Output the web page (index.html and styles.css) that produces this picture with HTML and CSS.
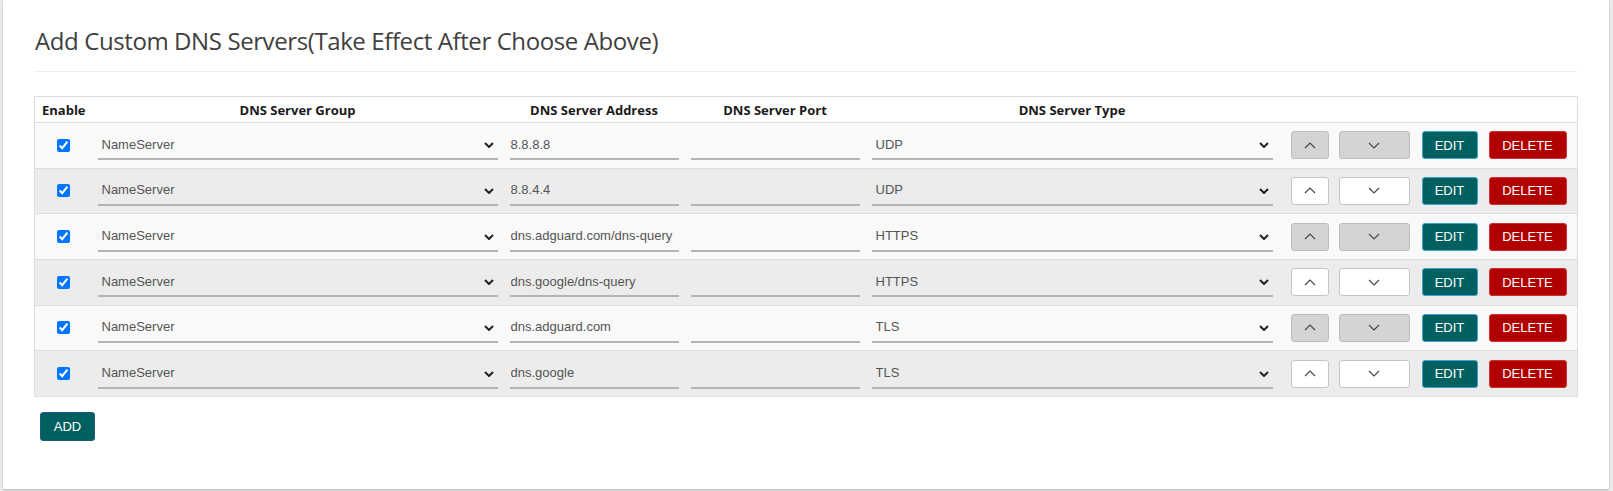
FILE: index.html
```html
<!DOCTYPE html>
<html>
<head>
<meta charset="utf-8">
<title>Custom DNS Servers</title>
<link rel="stylesheet" href="styles.css">
</head>
<body>
<div class="page">
  <div class="card">
    <h3 class="title">Add Custom DNS Servers(Take Effect After Choose Above)</h3>
    <hr class="sep">
    <table class="dns">
      <colgroup>
        <col class="w-enable"><col class="w-group"><col class="w-addr"><col class="w-port"><col class="w-type"><col>
      </colgroup>
      <thead>
        <tr><th class="th-enable">Enable</th><th>DNS Server Group</th><th>DNS Server Address</th><th>DNS Server Port</th><th>DNS Server Type</th><th></th></tr>
      </thead>
      <tbody>
        <tr>
          <td class="c-chk"><input class="chk" type="checkbox" checked></td>
          <td><div class="sel"><select class="field"><option>NameServer</option></select><svg class="caret" viewBox="0 0 10 6"><path d="M1 1L5 5L9 1"/></svg></div></td>
          <td><input class="field inp" type="text" value="8.8.8.8"></td>
          <td><input class="field inp" type="text" value=""></td>
          <td><div class="sel"><select class="field"><option>UDP</option></select><svg class="caret" viewBox="0 0 10 6"><path d="M1 1L5 5L9 1"/></svg></div></td>
          <td class="c-acts"><div class="acts"><button class="mv up off"><svg viewBox="0 0 12 7"><path d="M1 6L6 1L11 6"/></svg></button><button class="mv down off"><svg viewBox="0 0 12 7"><path d="M1 1L6 6L11 1"/></svg></button><button class="btn btn-edit">EDIT</button><button class="btn btn-del">DELETE</button></div></td>
        </tr>
        <tr>
          <td class="c-chk"><input class="chk" type="checkbox" checked></td>
          <td><div class="sel"><select class="field"><option>NameServer</option></select><svg class="caret" viewBox="0 0 10 6"><path d="M1 1L5 5L9 1"/></svg></div></td>
          <td><input class="field inp" type="text" value="8.8.4.4"></td>
          <td><input class="field inp" type="text" value=""></td>
          <td><div class="sel"><select class="field"><option>UDP</option></select><svg class="caret" viewBox="0 0 10 6"><path d="M1 1L5 5L9 1"/></svg></div></td>
          <td class="c-acts"><div class="acts"><button class="mv up"><svg viewBox="0 0 12 7"><path d="M1 6L6 1L11 6"/></svg></button><button class="mv down"><svg viewBox="0 0 12 7"><path d="M1 1L6 6L11 1"/></svg></button><button class="btn btn-edit">EDIT</button><button class="btn btn-del">DELETE</button></div></td>
        </tr>
        <tr>
          <td class="c-chk"><input class="chk" type="checkbox" checked></td>
          <td><div class="sel"><select class="field"><option>NameServer</option></select><svg class="caret" viewBox="0 0 10 6"><path d="M1 1L5 5L9 1"/></svg></div></td>
          <td><input class="field inp" type="text" value="dns.adguard.com/dns-query"></td>
          <td><input class="field inp" type="text" value=""></td>
          <td><div class="sel"><select class="field"><option>HTTPS</option></select><svg class="caret" viewBox="0 0 10 6"><path d="M1 1L5 5L9 1"/></svg></div></td>
          <td class="c-acts"><div class="acts"><button class="mv up off"><svg viewBox="0 0 12 7"><path d="M1 6L6 1L11 6"/></svg></button><button class="mv down off"><svg viewBox="0 0 12 7"><path d="M1 1L6 6L11 1"/></svg></button><button class="btn btn-edit">EDIT</button><button class="btn btn-del">DELETE</button></div></td>
        </tr>
        <tr>
          <td class="c-chk"><input class="chk" type="checkbox" checked></td>
          <td><div class="sel"><select class="field"><option>NameServer</option></select><svg class="caret" viewBox="0 0 10 6"><path d="M1 1L5 5L9 1"/></svg></div></td>
          <td><input class="field inp" type="text" value="dns.google/dns-query"></td>
          <td><input class="field inp" type="text" value=""></td>
          <td><div class="sel"><select class="field"><option>HTTPS</option></select><svg class="caret" viewBox="0 0 10 6"><path d="M1 1L5 5L9 1"/></svg></div></td>
          <td class="c-acts"><div class="acts"><button class="mv up"><svg viewBox="0 0 12 7"><path d="M1 6L6 1L11 6"/></svg></button><button class="mv down"><svg viewBox="0 0 12 7"><path d="M1 1L6 6L11 1"/></svg></button><button class="btn btn-edit">EDIT</button><button class="btn btn-del">DELETE</button></div></td>
        </tr>
        <tr>
          <td class="c-chk"><input class="chk" type="checkbox" checked></td>
          <td><div class="sel"><select class="field"><option>NameServer</option></select><svg class="caret" viewBox="0 0 10 6"><path d="M1 1L5 5L9 1"/></svg></div></td>
          <td><input class="field inp" type="text" value="dns.adguard.com"></td>
          <td><input class="field inp" type="text" value=""></td>
          <td><div class="sel"><select class="field"><option>TLS</option></select><svg class="caret" viewBox="0 0 10 6"><path d="M1 1L5 5L9 1"/></svg></div></td>
          <td class="c-acts"><div class="acts"><button class="mv up off"><svg viewBox="0 0 12 7"><path d="M1 6L6 1L11 6"/></svg></button><button class="mv down off"><svg viewBox="0 0 12 7"><path d="M1 1L6 6L11 1"/></svg></button><button class="btn btn-edit">EDIT</button><button class="btn btn-del">DELETE</button></div></td>
        </tr>
        <tr>
          <td class="c-chk"><input class="chk" type="checkbox" checked></td>
          <td><div class="sel"><select class="field"><option>NameServer</option></select><svg class="caret" viewBox="0 0 10 6"><path d="M1 1L5 5L9 1"/></svg></div></td>
          <td><input class="field inp" type="text" value="dns.google"></td>
          <td><input class="field inp" type="text" value=""></td>
          <td><div class="sel"><select class="field"><option>TLS</option></select><svg class="caret" viewBox="0 0 10 6"><path d="M1 1L5 5L9 1"/></svg></div></td>
          <td class="c-acts"><div class="acts"><button class="mv up"><svg viewBox="0 0 12 7"><path d="M1 6L6 1L11 6"/></svg></button><button class="mv down"><svg viewBox="0 0 12 7"><path d="M1 1L6 6L11 1"/></svg></button><button class="btn btn-edit">EDIT</button><button class="btn btn-del">DELETE</button></div></td>
        </tr>
      </tbody>
    </table>
    <button class="btn btn-add">ADD</button>
  </div>
</div>
</body>
</html>
```

FILE: styles.css
```css
* { box-sizing: border-box; }
html, body { margin: 0; }
body {
  background: #ebebeb;
  font-family: "Open Sans", "Noto Sans", sans-serif;
}
.page { padding: 0 4px 2px 3px; }
.card {
  background: #fff;
  box-shadow: 0 1px 2px rgba(0, 0, 0, 0.25);
  padding: 25px 31px 48px 31px;
}
.title {
  margin: 0;
  padding-left: 1px;
  font-size: 24px;
  line-height: 32px;
  font-weight: 400;
  letter-spacing: -0.4px;
  color: #404040;
}
.sep {
  border: 0;
  border-top: 1px solid #eeeeee;
  margin: 14px 1px 24px 1px;
}
.dns {
  width: 100%;
  border-collapse: collapse;
  table-layout: fixed;
  border: 1px solid #dddddd;
}
.w-enable { width: 57px; }
.w-group { width: 412px; }
.w-addr { width: 181px; }
.w-port { width: 181px; }
.w-type { width: 413px; }
.dns th {
  height: 26px;
  padding: 0;
  font-size: 13px;
  font-weight: 700;
  color: #1a1a1a;
  text-align: center;
  background: #fff;
}
.dns th.th-enable { text-align: left; padding-left: 7px; }
.dns td {
  height: 45.67px;
  padding: 0 6px;
  border-top: 1px solid #dddddd;
  vertical-align: middle;
}
.dns tbody tr:nth-child(odd) { background: #f9f9f9; }
.dns tbody tr:nth-child(even) { background: #ececec; }
.dns td.c-chk { padding: 0; }
.chk {
  display: block;
  width: 13px;
  height: 13px;
  margin: 0 auto;
}
.sel { position: relative; }
.field {
  display: block;
  width: 100%;
  height: 30px;
  border: 0;
  border-bottom: 2px solid #b4b4b4;
  border-radius: 0;
  background: transparent;
  font: 13px "Liberation Sans", Arial, sans-serif;
  color: #555555;
  padding: 0 4px;
  outline: none;
  -webkit-appearance: none;
  appearance: none;
}
.inp { padding: 0 1px; }
.caret {
  position: absolute;
  right: 4px;
  top: 12px;
  width: 10px;
  height: 6px;
  pointer-events: none;
  fill: none;
  stroke: #222;
  stroke-width: 2;
}
.dns td.c-acts { padding-left: 12px; padding-right: 0; }
.acts { display: flex; align-items: center; }
.mv {
  height: 28px;
  border: 1px solid #c4c4c4;
  border-radius: 3px;
  background: #fff;
  display: flex;
  align-items: center;
  justify-content: center;
  padding: 0;
}
.mv svg {
  width: 12px;
  height: 7px;
  fill: none;
  stroke: #444;
  stroke-width: 1.1;
}
.mv.up { width: 38px; }
.mv.down { width: 71px; margin-left: 10px; }
.mv.off { background: #d4d4d4; border-color: #bdbdbd; }
.btn {
  height: 28px;
  border-radius: 3px;
  font: 13px "Liberation Sans", Arial, sans-serif;
  color: #fff;
  padding: 0;
}
.btn-edit {
  width: 56px;
  margin-left: 12px;
  background: #00605f;
  border: 1px solid #3aa3cc;
}
.btn-del {
  width: 78px;
  margin-left: 11px;
  background: #b10000;
  border: 1px solid #d03030;
}
.btn-add {
  display: block;
  width: 55px;
  height: 29px;
  margin-top: 15px;
  margin-left: 6px;
  background: #00605f;
  border: 1px solid #1f5a86;
}
```
